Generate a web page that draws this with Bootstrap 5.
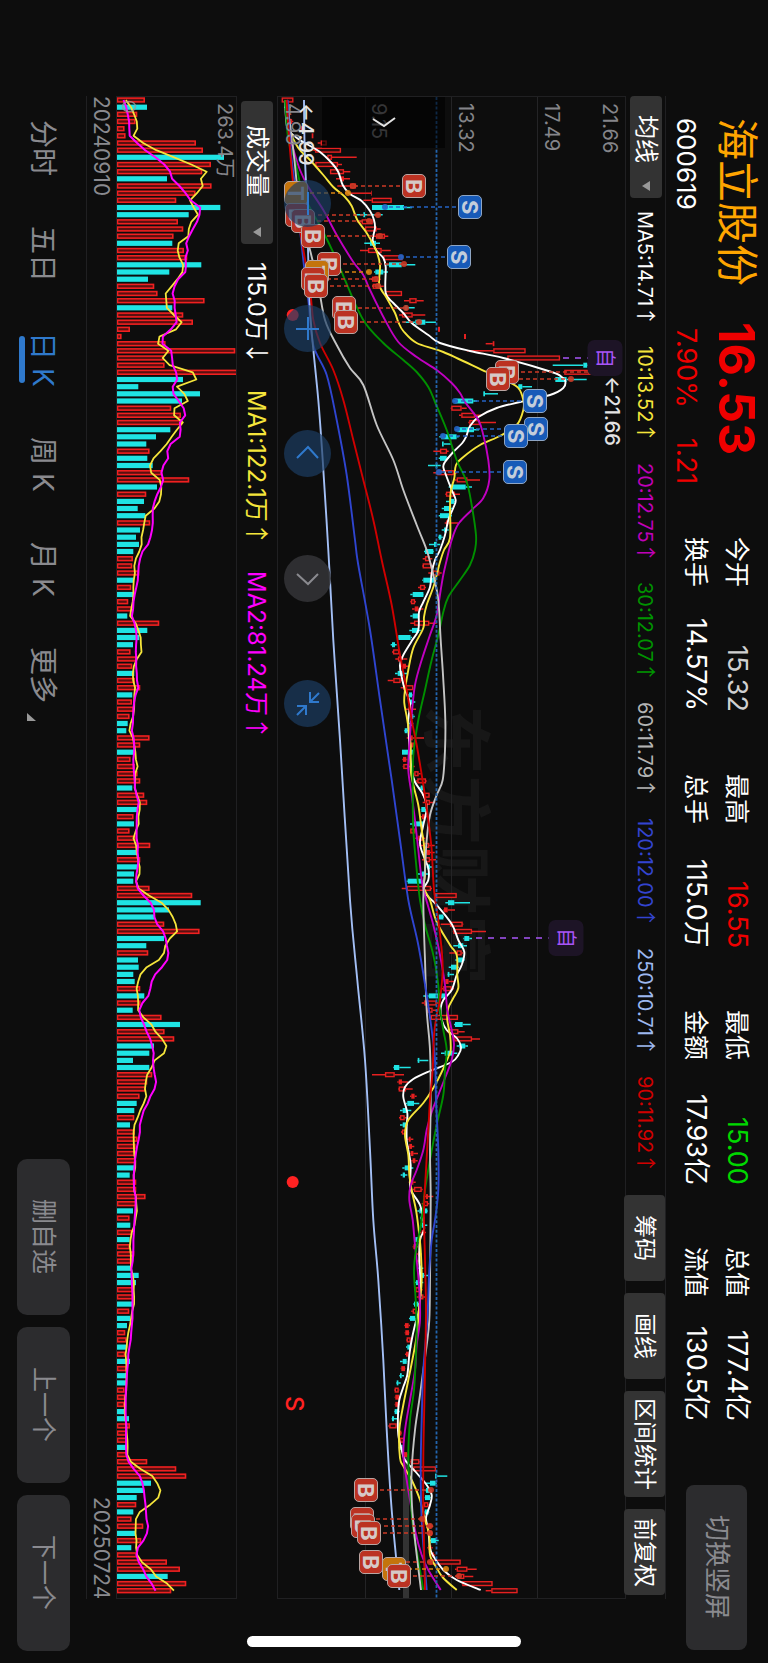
<!DOCTYPE html>
<html lang="zh-CN">
<head>
<meta charset="utf-8">
<meta name="viewport" content="width=device-width, initial-scale=1">
<title>海立股份 600619</title>
<link href="https://cdn.jsdelivr.net/npm/bootstrap@5.3.0/dist/css/bootstrap.min.css" rel="stylesheet">
<style>
  :root {
    --ink: #fff; --page: #0d0d0d; --rule: #202022; --muted: #8a8a8f;
    --up: #f00000; --down: #00d800;
  }
  body { background: var(--page); color: var(--ink); font-family: Inter, "Noto Sans CJK SC", sans-serif; overflow: hidden; }
  /* The whole screen is landscape: lines run top to bottom, rows stack right to left */
  .stage, .side { writing-mode: vertical-rl; text-orientation: sideways; }
  .stage { height: 100vh; width: 100%; white-space: nowrap; line-height: 1; }
  .stage button { border: 0; padding: 0; color: inherit; line-height: 1; }

  .quote-head { width: 102px; padding-top: 118px; padding-bottom: 13px; }
  .stock-name { font-size: 42px; line-height: 46px; color: #ffa500; }
  .stock-code { font-size: 26px; line-height: 40px; }
  .id-block { padding-right: 8px; gap: 8px; height: 204px; }
  .price-block { padding-right: 8px; gap: 8px; height: 215px; color: var(--up); }
  .price-now { font-size: 50px; font-weight: 700; line-height: 46px; }
  .price-diff { font-size: 27px; line-height: 40px; gap: 30px; padding-top: 6px; }
  .stats { display: grid; grid-template-columns: repeat(4, 1fr); column-gap: 62px; row-gap: 1px; padding-right: 11px; margin-bottom: 64px; font-size: 25px; line-height: 40px; }
  .stats span + span { font-size: 27px; }
  .stage .flip-btn { width: 61px; height: 165px; margin-right: 21px; background: #2c2c2e; color: var(--muted); border-radius: 8px; font-size: 26px; }

  .framed { margin-top: 96px; margin-bottom: 64px; }
  .ma-row { width: 41px; border-right: 1px solid var(--rule); border-left: 1px solid var(--rule); font-size: 20px; padding-bottom: 4px; }
  .stage .pick { flex: none; width: 32px; background: #333; border-radius: 4px; font-size: 24px; padding-bottom: 7px; }
  .stage .pick-ma { height: 102px; padding-top: 19px; }
  .stage .pick-vol { height: 143px; margin-top: 5px; padding-top: 24px; }
  .caret { width: 8px; height: 10px; fill: #999; }
  .ma-list { margin-top: 13px; }
  .ma-list, .tools-row { display: flex; }
  .ma-list { gap: 20px; }
  .tools-row { gap: 12px; align-self: stretch; }
  .stage .tool { background: #333; border-radius: 4px; font-size: 23px; height: 86px; width: 41px; }
  .stage .tool-wide { height: 106px; }
  .arr { font-family: "Noto Sans CJK SC", sans-serif; }
  .c10 { color: #f5e53b; } .c20 { color: #c000b8; } .c30 { color: #009400; } .c60 { color: #b4b4b4; }
  .c120 { color: #3344d0; } .c250 { color: #9db8f0; } .c90 { color: #d00000; } .cvol { color: #f0f; }

  .plot { position: relative; flex: 1 1 0; min-width: 0; border: 1px solid var(--rule); border-right: 0; }
  .plot svg.canvas, .vol-plot svg.canvas { position: absolute; inset: 0; width: 100%; height: 100%; }
  .axis { position: absolute; top: 6px; font-size: 20px; line-height: 20px; color: #85858a; }
  .note { position: absolute; font-size: 20px; line-height: 20px; color: #e4e4e4; font-weight: 500; }
  .logo-mark { position: absolute; left: 41%; top: 40.5%; font-size: 70px; line-height: 70px; color: #171717; font-weight: 700; }
  .pin { position: absolute; width: 24px; height: 24px; transform: translate(-50%, -50%); border: 1px solid #b9a6a3; border-radius: 5px; font-size: 22px; font-weight: 700; line-height: 1; color: #d6c9c7; background: #bb3222; display: flex; align-items: center; justify-content: center; }
  .pin-S { background: #175ab8; border-color: #8fa6c4; color: #c3cddb; }
  .pin-T { background: #c4740c; }
  .pin-Z { width: 35px; height: 36px; border: 0; border-radius: 7px; background: #1d1426; color: #a855f7; font-size: 20px; font-weight: 400; }
  .pull-tab { position: absolute; left: 44px; top: 0; width: 123px; height: 51px; background: rgba(0, 0, 0, .6) !important; }
  .pads { position: absolute; left: 6px; top: 83px; gap: 78px; }
  .stage .pad { width: 47px; height: 47px; border-radius: 50%; background: rgba(28, 62, 100, .68); stroke: #2f79cc; fill: none; stroke-width: 2; }
  .stage .pad-off { background: rgba(50, 50, 53, .9); stroke: #8a8a8f; }

  .vol-head { width: 40px; font-size: 24px; }
  .vol-head .ma-list { margin-top: 18px; gap: 25px; }
  .vol-plot { position: relative; width: 121px; border: 1px solid var(--rule); }
  .dates { width: 30px; border-left: 1px solid var(--rule); font-size: 21px; color: var(--muted); }

  .foot { width: 86px; padding-top: 120px; padding-bottom: 12px; }
  .tabs { gap: 50px; font-size: 28px; }
  .tabs a { color: var(--muted); text-decoration: none; position: relative; }
  .tabs .latin { margin-top: 8px; }
  .tabs a.on { color: #2f79cc; }
  .tabs a.on::after { content: ""; position: absolute; left: -10px; top: 4px; bottom: 4px; width: 6px; border-radius: 3px; background: #2f79cc; }
  .more-tip { position: absolute; left: -2px; bottom: -18px; width: 9px; height: 8px; fill: #999; }
  .nav-btns { gap: 12px; }
  .stage .nav-btn { width: 53px; height: 156px; background: #2c2c2e; color: var(--muted); border-radius: 10px; font-size: 25px; }
  .home-bar { position: absolute; bottom: 16px; left: 50%; width: 274px; height: 11px; margin-left: -137px; border-radius: 6px; background: #fff; }
</style>
</head>
<body>
<div class="stage d-flex flex-column position-relative">

  <header class="quote-head d-flex align-items-start">
    <div class="id-block d-flex flex-column">
      <div class="stock-name">海立股份</div>
      <div class="stock-code">600619</div>
    </div>
    <div class="price-block d-flex flex-column">
      <div class="price-now">16.53</div>
      <div class="price-diff d-flex"><span>7.90%</span><span>1.21</span></div>
    </div>
    <div class="stats flex-grow-1">
      <div class="d-flex justify-content-between"><span>今开</span><span style="color:#d0d0d0">15.32</span></div>
      <div class="d-flex justify-content-between"><span>最高</span><span style="color:var(--up)">16.55</span></div>
      <div class="d-flex justify-content-between"><span>最低</span><span style="color:var(--down)">15.00</span></div>
      <div class="d-flex justify-content-between"><span>总值</span><span>177.4亿</span></div>
      <div class="d-flex justify-content-between"><span>换手</span><span>14.57%</span></div>
      <div class="d-flex justify-content-between"><span>总手</span><span>115.0万</span></div>
      <div class="d-flex justify-content-between"><span>金额</span><span>17.93亿</span></div>
      <div class="d-flex justify-content-between"><span>流值</span><span>130.5亿</span></div>
    </div>
    <button type="button" class="flip-btn"><span class="side">切换竖屏</span></button>
  </header>

  <div class="ma-row framed d-flex align-items-center">
    <button type="button" class="pick pick-ma d-flex align-items-center justify-content-between">
      <span class="side">均线</span>
      <svg class="caret" viewBox="0 0 8 10"><path d="M0 5 8 0V10Z"/></svg>
    </button>
    <div class="ma-list flex-grow-1">
      <span>MA5:14.71<span class="arr">↑</span></span>
      <span class="c10">10:13.52<span class="arr">↑</span></span>
      <span class="c20">20:12.75<span class="arr">↑</span></span>
      <span class="c30">30:12.07<span class="arr">↑</span></span>
      <span class="c60">60:11.79<span class="arr">↑</span></span>
      <span class="c120">120:12.00<span class="arr">↑</span></span>
      <span class="c250">250:10.71<span class="arr">↑</span></span>
      <span class="c90">90:11.92<span class="arr">↑</span></span>
    </div>
    <div class="tools-row">
      <button type="button" class="tool"><span class="side">筹码</span></button>
      <button type="button" class="tool"><span class="side">画线</span></button>
      <button type="button" class="tool tool-wide"><span class="side">区间统计</span></button>
      <button type="button" class="tool"><span class="side">前复权</span></button>
    </div>
  </div>

  <main class="plot framed" id="plot">
    <div class="logo-mark" aria-hidden="true">东方财富</div>
    <svg class="canvas" id="price" viewBox="278 97 347 1501" preserveAspectRatio="none"></svg>
    <span class="axis" style="left:92.7%">21.66</span>
    <span class="axis" style="left:76.2%">17.49</span>
    <span class="axis" style="left:51.3%">13.32</span>
    <span class="axis" style="left:26.3%">9.15</span>
    <span class="axis" style="left:1.5%">4.99</span>
    <span class="note" style="left:5.2%;top:6px">←4.99</span>
    <span class="note" style="left:93.5%;top:18.6%">←21.66</span>
    <button type="button" class="pull-tab" aria-label="展开">
      <svg width="24" height="12" viewBox="0 0 24 12" fill="none" stroke="#e4e4e4" stroke-width="2"><path d="M1 2 12 9 23 1"/></svg>
    </button>
    <div class="pads d-flex">
      <button type="button" class="pad" aria-label="缩小"><svg width="47" height="47"><path d="M24 12V35"/></svg></button>
      <button type="button" class="pad" aria-label="放大"><svg width="47" height="47"><path d="M24 12V35M12 24H35"/></svg></button>
      <button type="button" class="pad" aria-label="左移"><svg width="47" height="47"><path d="M13 28 24 17 34 28"/></svg></button>
      <button type="button" class="pad pad-off" aria-label="右移"><svg width="47" height="47"><path d="M13 19 24 29 34 19"/></svg></button>
      <button type="button" class="pad" aria-label="收起"><svg width="47" height="47"><path d="M35 13 26 22M26 12V22H35M13 35 22 26M13 26H22V35"/></svg></button>
    </div>
  </main>

  <div class="vol-head framed d-flex align-items-center">
    <button type="button" class="pick pick-vol d-flex align-items-center justify-content-between">
      <span class="side">成交量</span>
      <svg class="caret" viewBox="0 0 8 10"><path d="M0 5 8 0V10Z"/></svg>
    </button>
    <div class="ma-list">
      <span>115.0万<span class="arr">↓</span></span>
      <span class="c10">MA1:122.1万<span class="arr">↑</span></span>
      <span class="cvol">MA2:81.24万<span class="arr">↑</span></span>
    </div>
  </div>

  <div class="vol-plot framed">
    <svg class="canvas" id="volume" viewBox="117 97 119 1501" preserveAspectRatio="none"></svg>
    <span class="axis" style="left:82%">263.4万</span>
  </div>

  <div class="dates framed d-flex justify-content-between align-items-center"><span>20240910</span><span>20250724</span></div>

  <footer class="foot d-flex justify-content-between align-items-center">
    <nav class="tabs d-flex">
      <a href="#">分时</a>
      <a href="#">五日</a>
      <a href="#" class="on">日<span class="latin">K</span></a>
      <a href="#">周<span class="latin">K</span></a>
      <a href="#">月<span class="latin">K</span></a>
      <a href="#">更多<svg class="more-tip" viewBox="0 0 9 8"><path d="M0 0V8H9Z"/></svg></a>
    </nav>
    <div class="nav-btns d-flex">
      <button type="button" class="nav-btn"><span class="side">删自选</span></button>
      <button type="button" class="nav-btn"><span class="side">上一个</span></button>
      <button type="button" class="nav-btn"><span class="side">下一个</span></button>
    </div>
  </footer>

  <div class="home-bar"></div>
</div>

<script>
/* Day i sits at y = 100 + STEP * i */
const STEP = 7.167, dayY = i => 100 + STEP * i, px = v => 270 + v / 3;
const RED = '#e62020', CYAN = '#1fe4e4';

/* Daily volume, r = up day, c = down day */
const vol = `r433 c440 r410 r405 r372 r375 r586 r607 c671 r631 r605 c500 r633 r585 r527 c660 c565 r532 r548 r519 c516 r550 r560 c603 c507 c443 r461 r471 r612 c516 r548 r577 r388 r363 r495 r704 r490 r492 r711 c548 c414 c599 c545 r512 r541 r545 c510 c467 c438 r447 c441 c457 r485 r566 c470 r437 c431 c412 c435 r449 c419 c407 c416 c399 r397 r395 r416 c400 r392 c400 r383 r395 c381 r476 c441 c417 c398 r390 r408 r395 c402 r403 r419 c396 r394 r400 r387 c382 c378 r447 r419 c405 r390 r403 r411 r419 c396 r431 r440 c410 r399 c401 r387 r405 r449 c410 r419 c413 c401 c399 r447 r575 c601 c506 c462 r491 r597 c491 c438 r443 c413 c415 c399 c403 r419 c432 r420 c397 r483 c539 r492 r521 c461 c447 c398 c447 r455 r440 r435 r417 c409 c402 r401 c389 r403 r411 r405 r405 r405 c402 c388 r407 r407 r435 r407 c398 r387 c390 r395 c388 r388 r401 r392 c395 c415 c407 r397 r398 c395 r386 c390 c380 r374 r378 c378 r374 c389 r378 c378 c377 r372 r374 r372 c375 c386 r388 r380 r382 c378 r382 r440 r527 r557 c452 c430 c409 r407 c399 r393 r428 c405 r422 c393 r410 r499 r538 c502 r557 r512`.split(' ').map(s => [s[0], +s.slice(1)]);

let v = '';
vol.forEach(([k, e], i) => {
  const w = (e - 350) / 3, y = dayY(i);
  v += k === 'c'
    ? `<rect x="117" y="${(y - 2.6).toFixed(1)}" width="${w.toFixed(1)}" height="5.2" fill="${CYAN}"/>`
    : `<rect x="117.5" y="${(y - 1.9).toFixed(1)}" width="${Math.max(w - 1, 1).toFixed(1)}" height="3.8" fill="#5a1010" stroke="#f02020" stroke-width="1.6"/>`;
});
const mean = n => vol.map((_, i) => {
  let s = 0;
  for (let k = i - n + 1; k <= i; k++) s += k < 0 ? 364 : vol[k][1];
  return [s / n / 3, dayY(i)];
});
const line = (pts, c, w) => `<polyline points="${pts.map(p => p[0].toFixed(1) + ',' + p[1].toFixed(1)).join(' ')}" fill="none" stroke="${c}" stroke-width="${w}" stroke-linejoin="round"/>`;
v += line(mean(5), '#f5e53b', 1.8) + line(mean(10), '#f0f', 2);
v += '<ellipse cx="129" cy="106.5" rx="6.5" ry="5" fill="none" stroke="#999" stroke-opacity=".8" stroke-width="1.5"/>';
document.getElementById('volume').innerHTML = v;

/* Daily candles: kind, low, body start, body end, high */
const candles = `r35,35,70,70 c42,46,60,62 r45,48,60,64 r50,54,66,70 r90,92,98,98 r125,125,130,130 r143,152,170,170 r130,135,213,213 r165,172,186,260 r136,136,204,216 r180,180,222,241 r198,213,222,240 r202,240,258,260 r225,304,306,306 r280,305,365,365 c306,306,402,426 c253,280,285,338 r260,275,308,310 r283,285,320,332 r310,318,345,355 c283,300,318,330 r270,294,335,362 r340,340,398,398 c350,357,395,436 c312,316,340,354 r303,306,325,332 r306,308,330,341 r345,345,396,396 r402,418,440,461 c398,404,412,434 r387,396,428,466 c400,436,466,498 r504,504,510,510 r582,582,588,588 r647,668,673,673 r590,670,767,767 r712,712,870,870 c848,940,952,980 r883,883,984,1050 c856,856,890,950 c742,745,757,786 c640,640,645,684 c550,556,610,621 r542,544,575,590 r567,574,615,635 r595,598,630,678 c556,562,612,627 c508,514,560,566 c516,516,521,545 r490,510,531,536 c506,510,530,536 c474,497,502,512 r490,500,552,562 r555,560,592,630 c536,540,587,606 r526,528,555,570 c528,540,553,557 c515,522,542,548 c506,510,540,546 r524,528,535,564 c515,522,530,536 c504,506,514,518 c477,492,500,511 c462,465,490,492 r458,465,480,487 r456,458,485,490 r475,488,508,515 c457,460,495,497 r444,450,465,468 c421,428,460,461 r421,423,435,438 r426,434,445,460 c421,428,445,448 r421,432,478,500 c418,426,447,452 c384,385,422,426 c362,366,375,380 r366,369,388,388 r376,384,396,412 r390,398,408,416 c375,383,400,412 r353,370,392,396 r392,400,430,430 c414,417,426,428 c416,420,426,436 r408,416,424,438 c420,424,430,434 c418,420,426,430 c402,404,412,415 r410,422,428,462 r418,422,432,434 c396,396,430,430 r397,399,409,412 r398,400,416,434 r430,433,446,452 r438,442,468,470 c444,452,460,462 r456,460,479,480 r458,468,480,496 c452,454,466,468 r452,456,464,470 c420,430,460,462 r420,421,436,440 r436,445,460,466 r448,460,478,494 r455,470,480,494 r456,465,480,498 c470,472,480,486 c444,455,462,476 c410,413,455,460 r395,410,483,486 r492,495,560,560 c526,534,553,600 r520,522,533,555 c505,506,520,522 r512,540,578,580 r548,550,606,648 c580,583,598,606 c550,564,580,591 r538,560,575,580 c556,562,580,584 c536,543,560,566 c532,533,538,552 r522,526,536,552 r515,520,545,552 c460,476,528,530 r455,463,500,510 r470,472,488,505 r477,482,564,564 c552,555,578,602 r530,536,565,584 r550,553,606,630 c560,568,586,594 c513,524,548,562 c442,443,448,475 c370,372,388,422 r306,345,374,402 r382,386,396,414 r384,386,408,428 r420,424,434,440 c408,412,432,448 c390,398,410,424 r387,390,404,410 c390,398,408,412 r393,396,408,410 r410,416,422,430 r414,418,426,433 r418,422,430,444 r424,428,436,443 c397,404,422,430 c392,398,405,412 r416,422,430,437 r428,432,455,458 r460,468,474,490 r455,460,474,478 c442,448,472,474 c450,452,458,464 c452,455,462,472 r450,455,464,468 c434,436,446,450 r428,430,440,444 r440,444,452,456 r440,446,452,456 c445,448,456,460 c450,455,462,474 c434,438,445,460 r432,436,450,458 r440,446,460,468 c430,432,444,448 r424,428,440,442 c417,420,436,438 r403,405,416,420 r404,406,417,418 r408,410,422,424 c408,412,422,424 r405,408,416,418 c390,398,410,412 r392,394,405,406 c388,390,395,402 c378,380,385,392 r372,374,386,388 r374,376,387,389 r374,376,387,389 c372,374,386,389 c365,366,372,384 r355,358,380,382 r384,386,394,396 r388,390,402,404 c386,388,398,400 r398,402,412,416 r420,422,448,450 r428,430,498,498 c495,495,500,532 c468,480,497,500 c464,468,480,486 c464,465,480,482 r460,462,475,478 c462,464,476,478 r452,455,466,470 r470,474,484,490 r470,474,486,488 c480,483,498,506 r472,475,484,488 r484,486,492,496 r478,480,572,572 r555,560,592,620 r556,562,583,610 r575,577,668,668 r647,664,743,743`.split(' ').map(s => [s[0], ...s.slice(1).split(',').map(Number)]);

/* Moving averages: offset along the price axis, y */
const averages = [
  ['#fff', `45,100 50,125 60,132 85,139 105,143 150,152 185,163 205,172 218,185 240,194 275,201 300,211 312,220 315,228 308,240 318,250 340,258 347,267 347,293 370,303 400,313 425,323 475,335 510,343 600,351 700,358 845,372 875,377 886,381 880,388 840,395 750,402 680,408 625,417 600,426 588,437 577,443 550,452 525,462 520,467 530,477 545,490 557,500 550,508 535,520 525,535 510,550 495,560 485,573 480,587 460,602 447,612 445,630 425,641 400,655 390,665 395,677 405,690 420,703 415,720 418,745 425,770 435,782 460,795 470,808 460,825 450,843 462,857 475,868 475,880 462,888 470,895 500,905 545,924 565,940 583,952 575,965 560,975 545,990 520,1000 512,1008 515,1020 530,1030 560,1038 573,1047 565,1055 545,1062 480,1071 430,1079 405,1087 400,1097 412,1113 410,1125 410,1140 415,1150 422,1165 420,1185 425,1192 450,1205 460,1220 462,1230 450,1240 448,1260 452,1285 447,1310 435,1325 425,1340 418,1355 412,1375 400,1387 388,1400 384,1415 385,1435 395,1450 405,1460 440,1473 470,1485 485,1495 480,1505 468,1518 475,1530 480,1548 490,1556 520,1570 560,1580 632,1590`],
  ['#f5e53b', `50,100 60,130 85,148 120,160 160,175 190,187 225,197 245,206 262,220 290,233 318,250 330,265 328,285 350,298 375,313 385,322 400,331 440,343 520,352 650,372 710,381 745,388 760,400 760,410 740,425 690,436 630,445 580,457 558,465 553,478 542,492 540,510 540,538 522,550 510,562 492,585 470,605 462,617 460,628 430,648 415,670 405,690 403,703 412,720 422,745 422,770 430,785 445,805 455,830 462,845 465,875 460,887 480,900 500,922 540,945 560,955 562,975 565,988 550,998 535,1008 532,1020 540,1035 542,1050 535,1057 515,1072 490,1088 460,1103 415,1120 405,1135 415,1155 418,1175 425,1190 438,1210 446,1230 452,1250 455,1280 450,1300 440,1335 430,1355 415,1380 400,1405 388,1430 390,1458 400,1466 425,1480 450,1500 465,1520 478,1535 480,1555 500,1568 520,1578 560,1590`],
  ['#c000c0', `47,100 55,130 75,155 90,170 115,187 160,210 200,235 250,262 280,275 300,290 345,320 385,342 440,357 500,370 545,383 570,393 585,402 625,420 640,435 655,460 658,480 640,498 605,510 565,524 545,540 530,560 520,575 512,590 500,615 480,635 455,660 435,685 425,715 418,745 415,770 425,795 435,820 445,850 455,880 465,895 490,925 510,955 525,985 532,1010 545,1030 552,1045 545,1060 525,1078 505,1095 485,1112 470,1130 460,1150 440,1170 422,1185 418,1200 428,1220 435,1245 440,1260 448,1290 450,1320 440,1345 435,1370 420,1400 405,1430 400,1455 410,1480 420,1500 435,1530 455,1555 475,1570 512,1590`],
  ['#008f00', `45,100 55,140 75,160 95,190 120,208 160,232 200,260 225,280 280,320 340,343 400,360 440,372 475,387 495,402 530,430 560,460 590,482 605,505 618,535 615,550 600,565 570,580 535,597 520,612 505,635 485,660 465,690 445,720 430,755 428,790 430,830 440,870 450,900 465,925 490,955 505,985 508,1005 520,1030 530,1050 525,1070 520,1095 500,1125 480,1160 465,1190 457,1215 450,1230 438,1250 432,1270 437,1300 440,1330 437,1360 432,1390 420,1420 415,1455 420,1490 430,1530 445,1560 460,1590`],
  ['#c4c4c4', `50,100 70,150 90,210 120,250 145,285 165,320 200,345 240,368 280,385 320,425 370,460 400,490 440,525 470,550 490,575 505,600 512,640 520,680 526,720 525,750 518,780 500,795 480,815 470,840 465,870 460,900 465,960 470,1010 480,1050 482,1100 480,1150 482,1200 480,1280 478,1320 470,1345 460,1370 448,1400 435,1430 425,1470 425,1500 435,1540 453,1590`],
  ['#2f45d0', `53,100 62,150 80,200 100,260 115,300 130,345 170,375 200,420 230,475 255,540 265,565 300,630 330,700 365,780 390,840 415,900 445,945 470,995 485,1030 495,1060 498,1100 505,1150 505,1190 495,1220 485,1240 478,1270 472,1320 460,1370 455,1420 452,1470 455,1520 470,1590`],
  ['#a3bff5', `102,100 104,150 110,200 115,260 122,320 145,400 158,460 175,550 190,640 210,740 240,900 262,980 285,1060 300,1150 310,1220 325,1280 340,1360 350,1430 365,1510 388,1590`],
  ['#d00000', `50,100 60,150 75,200 95,240 120,290 130,320 150,343 190,370 220,400 250,440 280,480 310,520 335,560 365,605 390,655 410,690 425,720 440,745 460,785 475,820 485,850 492,890 505,920 515,950 518,970 510,1000 500,1015 492,1035 488,1070 480,1100 475,1130 468,1170 462,1210 465,1260 468,1310 465,1370 462,1420 460,1460 460,1510 465,1590`]
];

/* Trade marks: kind, badge x, y, x of the dot it points at */
const pins = [
  ['B',414,186,353],['S',470,207,385],['S',459,257,401],['T',296,193,348],['B',297,215,378],['B',303,221,369],
  ['B',313,236,380],['B',329,264,404],['T',317,272,369],['B',313,279,376],['B',316,286,378],['B',344,308,406],['B',346,322,419],
  ['Z',605,358,560],['B',507,372,591],['B',498,379,571],['S',535,401,455],['S',536,429,457],['S',516,436,443],['S',515,472,439],
  ['Z',566,938,470],
  ['B',366,1490,431],['B',362,1519,422],['B',363,1526,430],['B',369,1533,430],['B',371,1562,430],['T',394,1569,446],['B',399,1576,459]
];
const tone = { B: '#cc3a26', S: '#2463c4', T: '#d9820f', Z: '#a855f7' };

function smooth(text, color) {
  const p = text.split(' ').map(s => s.split(',').map(Number)).map(([a, b]) => [px(a), b]);
  let d = `M${p[0]}`;
  for (let i = 0; i < p.length - 1; i++) {
    const a = p[i - 1] || p[i], b = p[i], c = p[i + 1], e = p[i + 2] || c;
    d += `C${[b[0] + (c[0] - a[0]) / 6, b[1] + (c[1] - a[1]) / 6, c[0] - (e[0] - b[0]) / 6, c[1] - (e[1] - b[1]) / 6, c[0], c[1]].map(n => n.toFixed(1))}`;
  }
  return `<path d="${d}" fill="none" stroke="${color}" stroke-width="1.9"/>`;
}

let s = '<path d="M365.5 96V1599M451.5 96V1599M537.5 96V1599" stroke="#242426"/>';
s += '<rect x="403" y="1455" width="6" height="143" fill="#333"/>';
candles.forEach(([k, lo, b0, b1, hi], i) => {
  const y = dayY(i), c = k === 'c' ? CYAN : RED;
  s += `<path d="M${px(lo).toFixed(1)} ${y.toFixed(1)}H${px(b0).toFixed(1)}M${px(b1).toFixed(1)} ${y.toFixed(1)}H${px(hi).toFixed(1)}" stroke="${c}" stroke-width="1.5"/>`;
  const w = (b1 - b0) / 3;
  s += k === 'c' || w < 4
    ? `<rect x="${px(b0).toFixed(1)}" y="${(y - 2.5).toFixed(1)}" width="${w.toFixed(1)}" height="5" fill="${c}"/>`
    : `<rect x="${(px(b0) + .6).toFixed(1)}" y="${(y - 1.9).toFixed(1)}" width="${(w - 1.2).toFixed(1)}" height="3.8" fill="#2c0c0c" stroke="${c}" stroke-width="1.4"/>`;
});
averages.forEach(([c, t]) => s += smooth(t, c));
s += '<path d="M436.5 97V1598" stroke="#2365ae" stroke-width="1.8" stroke-dasharray="3 1.8"/>';
pins.forEach(([k, x, y, dot]) => {
  s += `<path d="M${x} ${y}H${dot}" stroke="${tone[k]}" stroke-width="1.5" stroke-dasharray="${k === 'Z' ? '6 6' : '4 3'}"/>`;
  if (k !== 'Z') s += `<circle cx="${dot}" cy="${y}" r="3" fill="${tone[k]}" fill-opacity=".9"/>`;
});
s += '<circle cx="292.7" cy="315" r="6" fill="#f22"/><circle cx="292.7" cy="1182" r="6" fill="#f22"/>';
document.getElementById('price').innerHTML = s;

const plot = document.getElementById('plot'), pads = plot.querySelector('.pads');
function mark(cls, text, x, y) {
  const el = document.createElement('span');
  el.className = cls;
  el.textContent = text;
  el.style.left = ((x - 278) / 3.47).toFixed(2) + '%';
  el.style.top = ((y - 97) / 15.01).toFixed(2) + '%';
  plot.insertBefore(el, pads);
  return el;
}
pins.forEach(([k, x, y]) => mark('pin pin-' + k, k === 'Z' ? '自' : k, x, y));
const lone = mark('pin', 'S', 294, 1404);
lone.style.cssText += 'background:none;border:0;color:#f22;font-size:24px;font-weight:500';
</script>
</body>
</html>
